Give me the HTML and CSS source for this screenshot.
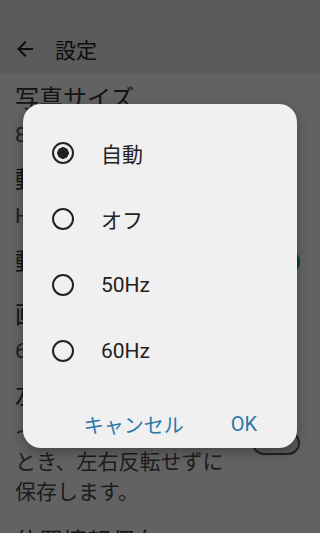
FILE: index.html
```html
<!DOCTYPE html>
<html lang="ja">
<head>
    <meta charset="UTF-8">
    <meta name="viewport" content="width=device-width, initial-scale=1.0">
    <title>設定</title>
    <link rel="stylesheet" href="styles.css">
</head>
<body>
    <div class="screen">
        <header class="appbar">
            <svg class="back" viewBox="0 0 24 24" width="24" height="24">
                <path d="M20 11H7.83l5.59-5.59L12 4l-8 8 8 8 1.41-1.41L7.83 13H20v-2z"/>
            </svg>
            <h1>設定</h1>
        </header>

        <ul class="prefs">
            <li class="pref">
                <div class="pref-text">
                    <div class="pref-title">写真サイズ</div>
                    <div class="pref-summary">8M (3264×2448)</div>
                </div>
            </li>
            <li class="pref">
                <div class="pref-text">
                    <div class="pref-title">動画サイズ</div>
                    <div class="pref-summary">HD (1280×720)</div>
                </div>
            </li>
            <li class="pref single">
                <div class="pref-text">
                    <div class="pref-title">動画手ぶれ補正</div>
                </div>
                <span class="switch on"></span>
            </li>
            <li class="pref">
                <div class="pref-text">
                    <div class="pref-title">画面フリッカー低減</div>
                    <div class="pref-summary">60Hz</div>
                </div>
            </li>
            <li class="pref">
                <div class="pref-text">
                    <div class="pref-title">左右反転なし</div>
                    <div class="pref-summary">インカメラで撮影したとき、左右反転せずに保存します。</div>
                </div>
                <span class="switch"></span>
            </li>
            <li class="pref last">
                <div class="pref-text">
                    <div class="pref-title">位置情報保存</div>
                </div>
            </li>
        </ul>

        <!-- dialog over a dimmed page -->
        <div class="scrim">
            <div class="dialog" role="dialog">
                <ul class="choices">
                    <li class="choice checked"><span class="radio"></span><span>自動</span></li>
                    <li class="choice"><span class="radio"></span><span>オフ</span></li>
                    <li class="choice"><span class="radio"></span><span>50Hz</span></li>
                    <li class="choice"><span class="radio"></span><span>60Hz</span></li>
                </ul>
                <div class="actions">
                    <button class="text-btn">キャンセル</button>
                    <button class="text-btn">OK</button>
                </div>
            </div>
        </div>
    </div>
</body>
</html>
```

FILE: styles.css
```css
body {
    margin: 0;
    font-family: Roboto, "Noto Sans CJK JP", sans-serif;
    background: #f5f5f5;
}
.screen {
    position: relative;
    width: 320px;
    height: 533px;
    overflow: hidden;
    background: #f5f5f5;
}
.appbar {
    display: flex;
    align-items: center;
    height: 49px;
    padding: 24px 0 0 13px;
    background: #e3e3e3;
}
.back {
    fill: #222;
}
.appbar h1 {
    margin: 0 0 0 18px;
    font-size: 21px;
    font-weight: 400;
    color: #222;
}
.prefs {
    list-style: none;
    margin: 0;
    padding: 0;
}
.pref {
    display: flex;
    align-items: center;
    gap: 16px;
    padding: 9px 20px 4px 15px;
}
.pref.single {
    padding: 10px 20px 10px 15px;
}
.pref.last {
    padding-top: 14px;
}
.pref-text {
    flex: 1;
    min-width: 0;
}
.pref-title {
    font-size: 24px;
    line-height: 34px;
    color: #333;
    white-space: nowrap;
}
.pref-summary {
    margin-top: 4px;
    font-size: 21px;
    line-height: 30px;
    color: #4a4a4a;
}
.switch {
    flex: none;
    width: 48px;
    height: 24px;
    box-sizing: border-box;
    border: 2px solid #555;
    border-radius: 12px;
    background: #e4e4e4;
}
.switch.on {
    border-color: #1a9aa8;
    background: #1a9aa8;
}
.scrim {
    position: absolute;
    inset: 0;
    background: rgba(0, 0, 0, 0.6);
}
.dialog {
    width: 274px;
    height: 344px;
    margin: 104px auto 0;
    box-sizing: border-box;
    padding-top: 16px;
    border-radius: 18px;
    background: #f0f0f0;
    box-shadow: 0 4px 12px rgba(0, 0, 0, 0.3);
}
.choices {
    list-style: none;
    margin: 0;
    padding: 0;
}
.choice {
    display: flex;
    align-items: center;
    gap: 27px;
    height: 66px;
    padding-left: 29px;
    font-size: 21px;
    color: #222;
}
.radio {
    width: 22px;
    height: 22px;
    box-sizing: border-box;
    border: 2.5px solid #222;
    border-radius: 50%;
}
.choice.checked .radio {
    background: radial-gradient(circle, #222 0 5.5px, transparent 6px);
}
.actions {
    display: flex;
    justify-content: flex-end;
    gap: 15px;
    margin-top: 20px;
    padding-right: 24px;
}
.text-btn {
    height: 40px;
    padding: 0 16px;
    border: 0;
    background: none;
    font-family: Roboto, "Noto Sans CJK JP", sans-serif;
    font-size: 20px;
    font-weight: 400;
    color: #2a78a8;
}
```
